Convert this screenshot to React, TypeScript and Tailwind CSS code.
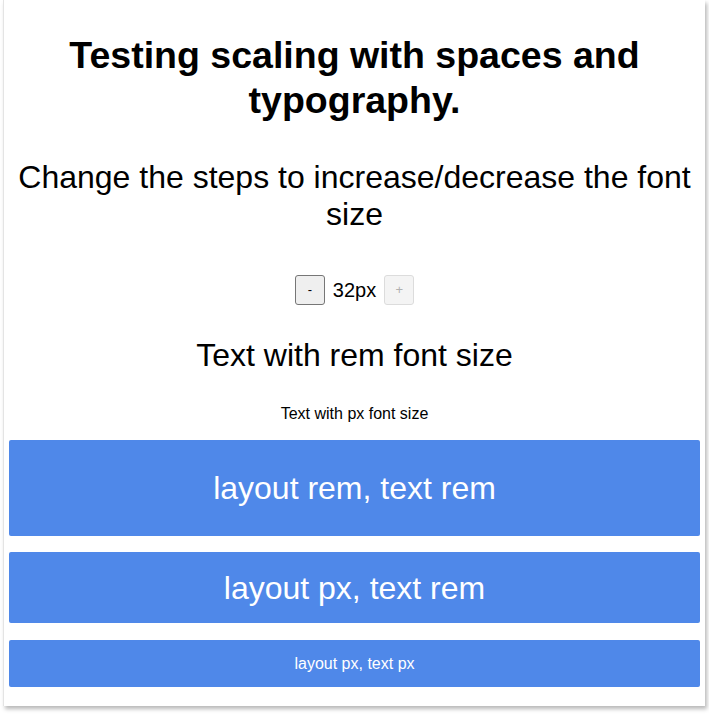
export default function App() {
  return (
    <div className="min-h-screen bg-white font-['Liberation_Sans',Arial,sans-serif] text-black">
      <div className="ml-[3px] w-[702px] h-[706px] border-l border-[#e4e4e4] shadow-[2px_3px_4px_rgba(0,0,0,0.28)] px-[5px] text-center">
        <h1 className="pt-[33px] text-[37.5px] font-bold leading-[45px]">
          Testing scaling with spaces and typography.
        </h1>
        <p className="mt-[36px] text-[32px] leading-[37px]">
          Change the steps to increase/decrease the font size
        </p>
        <div className="mt-[42px] flex items-center justify-center gap-2">
          <button className="w-[30px] h-[30px] rounded-[3px] border border-[#767676] bg-[#efefef] text-[13px]">
            -
          </button>
          <span className="text-[20px] leading-[30px]">32px</span>
          <button
            disabled
            className="w-[30px] h-[30px] rounded-[3px] border border-[#dcdcdc] bg-[#f4f4f4] text-[13px] text-[#b0b0b0]"
          >
            +
          </button>
        </div>
        <p className="mt-[32px] text-[32px] leading-[37px]">Text with rem font size</p>
        <p className="mt-[31px] text-[16px] leading-[18px]">Text with px font size</p>
        <div className="mt-[17px] flex flex-col text-white">
          <div className="h-[96px] flex items-center justify-center rounded-[2px] bg-[#4f88e9] text-[32px]">
            layout rem, text rem
          </div>
          <div className="mt-[16px] h-[71px] flex items-center justify-center rounded-[2px] bg-[#4f88e9] text-[32px]">
            layout px, text rem
          </div>
          <div className="mt-[17px] h-[47px] flex items-center justify-center rounded-[2px] bg-[#4f88e9] text-[16px]">
            layout px, text px
          </div>
        </div>
      </div>
    </div>
  );
}
